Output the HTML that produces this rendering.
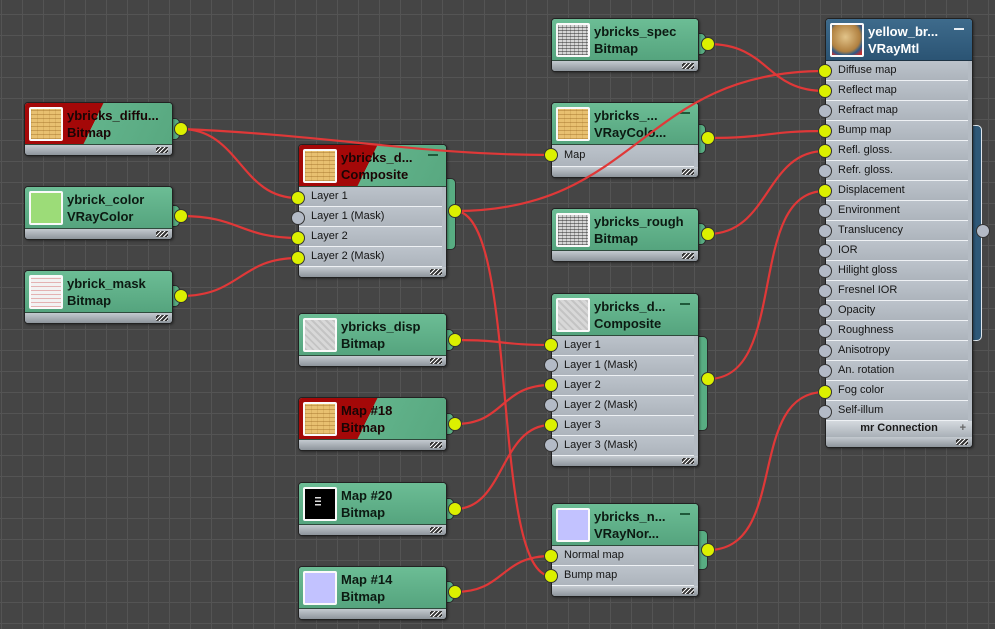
<!DOCTYPE html>
<html><head><meta charset="utf-8">
<style>
*{box-sizing:border-box;margin:0;padding:0}
body{width:995px;height:629px;overflow:hidden;position:relative;font-family:"Liberation Sans",sans-serif;
background-color:#454545;
background-image:linear-gradient(to right,#545454 1px,transparent 1px),linear-gradient(to bottom,#545454 1px,transparent 1px);
background-size:21px 21px;background-position:1px 14px}
.bump{position:absolute;background:#58ad82;border:1px solid #2a2a2a;border-radius:5px}
.n{position:absolute;border:1px solid #222;border-radius:4px;background:#b4bbc3;overflow:hidden;box-shadow:1px 1px 2px rgba(0,0,0,.4)}
.h{height:42px;position:relative;background:linear-gradient(#6cbd95,#55a47e);border-bottom:1px solid #2f4a3c}
.h.red{background:linear-gradient(116deg,#a40808 0,#a40808 47%,#62b38b 47%,#58a880 100%)}
.h.blue{background:linear-gradient(#3e6b8c,#2b5474);border-bottom:1px solid #1d3344}
.th{position:absolute;left:4px;top:4px;width:34px;height:34px;border:2px solid #fafafa;border-radius:2px}
.t{position:absolute;left:42px;top:4px;font-weight:bold;font-size:13px;line-height:17px;color:#0c1a12;white-space:nowrap}
.h.red .t{color:#1a0505}
.h.blue .t{color:#fff}
.min{position:absolute;right:8px;top:9px;width:10px;height:2px;background:#1f5a3a}
.h.blue .min{background:#e8eef3}
.r{height:20px;line-height:19px;font-size:11px;color:#151515;padding-left:12px;border-bottom:1px solid #eef1f4;background:linear-gradient(#bcc3cb,#adb4bc);margin-right:4px}
.f{height:10px;background:linear-gradient(#c4cad0,#8e959c);position:relative}
.f:after{content:"";position:absolute;right:4px;top:2px;width:12px;height:6px;background:repeating-linear-gradient(135deg,#fff 0 1px,#333 1px 3px)}
.brick{background:#e8c070;background-image:repeating-linear-gradient(0deg,rgba(140,90,20,.35) 0 1px,transparent 1px 4px),repeating-linear-gradient(90deg,rgba(140,90,20,.15) 0 1px,transparent 1px 6px)}
.gray{background:#d6d6d6;background-image:repeating-linear-gradient(0deg,rgba(40,40,40,.5) 0 1px,transparent 1px 3px),repeating-linear-gradient(90deg,rgba(40,40,40,.3) 0 1px,transparent 1px 4px)}
.lgray{background:#d8d8d8;background-image:repeating-linear-gradient(45deg,rgba(150,150,150,.3) 0 2px,transparent 2px 5px)}
.mask{background:#f2f2f2;background-image:repeating-linear-gradient(0deg,rgba(200,60,60,.35) 0 1px,transparent 1px 4px)}
.green{background:#9cdc78}
.lav{background:#c2c2ff}
.blk{background:#000}
.ball{background:radial-gradient(circle at 45% 40%,#e2c48a,#b08040 60%,#2c5a8a 75%,#c03030 90%)}
.mr{height:16px;line-height:15px;text-align:center;font-weight:bold;font-size:11px;color:#1a1a1a;background:linear-gradient(#d4d9de,#a9b0b7);position:relative}
svg{position:absolute;left:0;top:0}
</style></head><body>

<div class="bump" style="left:166px;top:118px;width:14px;height:22px"></div>
<div class="bump" style="left:166px;top:205px;width:14px;height:22px"></div>
<div class="bump" style="left:166px;top:285px;width:14px;height:22px"></div>
<div class="bump" style="left:440px;top:178px;width:16px;height:72px"></div>
<div class="bump" style="left:692px;top:33px;width:14px;height:22px"></div>
<div class="bump" style="left:692px;top:124px;width:14px;height:30px"></div>
<div class="bump" style="left:692px;top:223px;width:14px;height:22px"></div>
<div class="bump" style="left:440px;top:329px;width:14px;height:22px"></div>
<div class="bump" style="left:440px;top:413px;width:14px;height:22px"></div>
<div class="bump" style="left:440px;top:498px;width:14px;height:22px"></div>
<div class="bump" style="left:440px;top:581px;width:14px;height:22px"></div>
<div class="bump" style="left:692px;top:336px;width:16px;height:95px"></div>
<div class="bump" style="left:692px;top:530px;width:16px;height:40px"></div>
<div class="bump" style="left:966px;top:125px;width:16px;height:216px;background:#2e5878;border-color:#dfe6ec"></div>

<div class="n" style="left:24px;top:102px;width:149px"><div class="h red"><div class="th brick"></div><div class="t">ybricks_diffu...<br>Bitmap</div></div><div class="f"></div></div>
<div class="n" style="left:24px;top:186px;width:149px"><div class="h"><div class="th green"></div><div class="t">ybrick_color<br>VRayColor</div></div><div class="f"></div></div>
<div class="n" style="left:24px;top:270px;width:149px"><div class="h"><div class="th mask"></div><div class="t">ybrick_mask<br>Bitmap</div></div><div class="f"></div></div>

<div class="n" style="left:298px;top:144px;width:149px"><div class="h red"><div class="th brick"></div><div class="t">ybricks_d...<br>Composite</div><div class="min"></div></div>
<div class="r">Layer 1</div><div class="r">Layer 1 (Mask)</div><div class="r">Layer 2</div><div class="r">Layer 2 (Mask)</div><div class="f"></div></div>

<div class="n" style="left:298px;top:313px;width:149px"><div class="h"><div class="th lgray"></div><div class="t">ybricks_disp<br>Bitmap</div></div><div class="f"></div></div>
<div class="n" style="left:298px;top:397px;width:149px"><div class="h red"><div class="th brick"></div><div class="t">Map #18<br>Bitmap</div></div><div class="f"></div></div>
<div class="n" style="left:298px;top:482px;width:149px"><div class="h"><div class="th blk"></div><div class="t">Map #20<br>Bitmap</div></div><div class="f"></div></div>
<div class="n" style="left:298px;top:566px;width:149px"><div class="h"><div class="th lav"></div><div class="t">Map #14<br>Bitmap</div></div><div class="f"></div></div>

<div class="n" style="left:551px;top:18px;width:148px"><div class="h"><div class="th gray"></div><div class="t">ybricks_spec<br>Bitmap</div></div><div class="f"></div></div>
<div class="n" style="left:551px;top:102px;width:148px"><div class="h"><div class="th brick"></div><div class="t">ybricks_...<br>VRayColo...</div><div class="min"></div></div><div class="r" style="height:22px;line-height:21px">Map</div><div class="f"></div></div>
<div class="n" style="left:551px;top:208px;width:148px"><div class="h"><div class="th gray"></div><div class="t">ybricks_rough<br>Bitmap</div></div><div class="f"></div></div>

<div class="n" style="left:551px;top:293px;width:148px"><div class="h"><div class="th lgray"></div><div class="t">ybricks_d...<br>Composite</div><div class="min"></div></div>
<div class="r">Layer 1</div><div class="r">Layer 1 (Mask)</div><div class="r">Layer 2</div><div class="r">Layer 2 (Mask)</div><div class="r">Layer 3</div><div class="r">Layer 3 (Mask)</div><div class="f"></div></div>

<div class="n" style="left:551px;top:503px;width:148px"><div class="h"><div class="th lav"></div><div class="t">ybricks_n...<br>VRayNor...</div><div class="min"></div></div>
<div class="r">Normal map</div><div class="r">Bump map</div><div class="f"></div></div>

<div class="n" style="left:825px;top:18px;width:148px"><div class="h blue"><div class="th ball"></div><div class="t">yellow_br...<br>VRayMtl</div><div class="min"></div></div>
<div class="r">Diffuse map</div><div class="r">Reflect map</div><div class="r">Refract map</div><div class="r">Bump map</div><div class="r">Refl. gloss.</div><div class="r">Refr. gloss.</div><div class="r">Displacement</div><div class="r">Environment</div><div class="r">Translucency</div><div class="r">IOR</div><div class="r">Hilight gloss</div><div class="r">Fresnel IOR</div><div class="r">Opacity</div><div class="r">Roughness</div><div class="r">Anisotropy</div><div class="r">An. rotation</div><div class="r">Fog color</div><div class="r">Self-illum</div>
<div class="mr">mr Connection<span style="position:absolute;right:6px;color:#666">+</span></div><div class="f"></div></div>

<svg width="995" height="629">
<g fill="none" stroke="#e03838" stroke-width="2.2">
<path d="M181 129 C240 129 240 198 298 198"/>
<path d="M181 129 C330 135 420 155 551 155"/>
<path d="M181 216 C240 216 240 238 298 238"/>
<path d="M181 296 C240 296 240 258 298 258"/>
<path d="M455 211 C640 211 640 71 825 71"/>
<path d="M455 211 C520 211 490 576 551 576"/>
<path d="M708 44 C770 44 765 91 825 91"/>
<path d="M708 138 C770 138 765 131 825 131"/>
<path d="M708 234 C770 234 765 151 825 151"/>
<path d="M708 379 C790 379 745 191 825 191"/>
<path d="M708 550 C790 550 745 392 825 392"/>
<path d="M455 340 C505 340 500 345 551 345"/>
<path d="M455 424 C505 424 500 385 551 385"/>
<path d="M455 509 C505 509 500 425 551 425"/>
<path d="M455 592 C505 592 500 556 551 556"/>
</g>
<g stroke="#333" stroke-width="1">
<g fill="#dcf000">
<circle cx="181" cy="129" r="6.5"/><circle cx="181" cy="216" r="6.5"/><circle cx="181" cy="296" r="6.5"/>
<circle cx="298" cy="198" r="6.5"/><circle cx="298" cy="238" r="6.5"/><circle cx="298" cy="258" r="6.5"/>
<circle cx="455" cy="211" r="6.5"/><circle cx="455" cy="340" r="6.5"/><circle cx="455" cy="424" r="6.5"/><circle cx="455" cy="509" r="6.5"/><circle cx="455" cy="592" r="6.5"/>
<circle cx="551" cy="155" r="6.5"/><circle cx="551" cy="345" r="6.5"/><circle cx="551" cy="385" r="6.5"/><circle cx="551" cy="425" r="6.5"/><circle cx="551" cy="556" r="6.5"/><circle cx="551" cy="576" r="6.5"/>
<circle cx="708" cy="44" r="6.5"/><circle cx="708" cy="138" r="6.5"/><circle cx="708" cy="234" r="6.5"/><circle cx="708" cy="379" r="6.5"/><circle cx="708" cy="550" r="6.5"/>
<circle cx="825" cy="71" r="6.5"/><circle cx="825" cy="91" r="6.5"/><circle cx="825" cy="131" r="6.5"/><circle cx="825" cy="151" r="6.5"/><circle cx="825" cy="191" r="6.5"/><circle cx="825" cy="392" r="6.5"/>
</g>
<g fill="#b3bac6">
<circle cx="298" cy="218" r="6.5"/>
<circle cx="551" cy="365" r="6.5"/><circle cx="551" cy="405" r="6.5"/><circle cx="551" cy="445" r="6.5"/>
<circle cx="825" cy="111" r="6.5"/><circle cx="825" cy="171" r="6.5"/><circle cx="825" cy="211" r="6.5"/><circle cx="825" cy="231" r="6.5"/><circle cx="825" cy="251" r="6.5"/><circle cx="825" cy="271" r="6.5"/><circle cx="825" cy="291" r="6.5"/><circle cx="825" cy="311" r="6.5"/><circle cx="825" cy="331" r="6.5"/><circle cx="825" cy="351" r="6.5"/><circle cx="825" cy="371" r="6.5"/><circle cx="825" cy="412" r="6.5"/>
<circle cx="983" cy="231" r="6.5"/>
</g>
</g>
<g fill="#ddd"><rect x="315" y="497" width="6" height="1.5"/><rect x="315" y="500.5" width="6" height="1.5"/><rect x="315" y="504" width="6" height="1.5"/></g>
</svg>
</body></html>
